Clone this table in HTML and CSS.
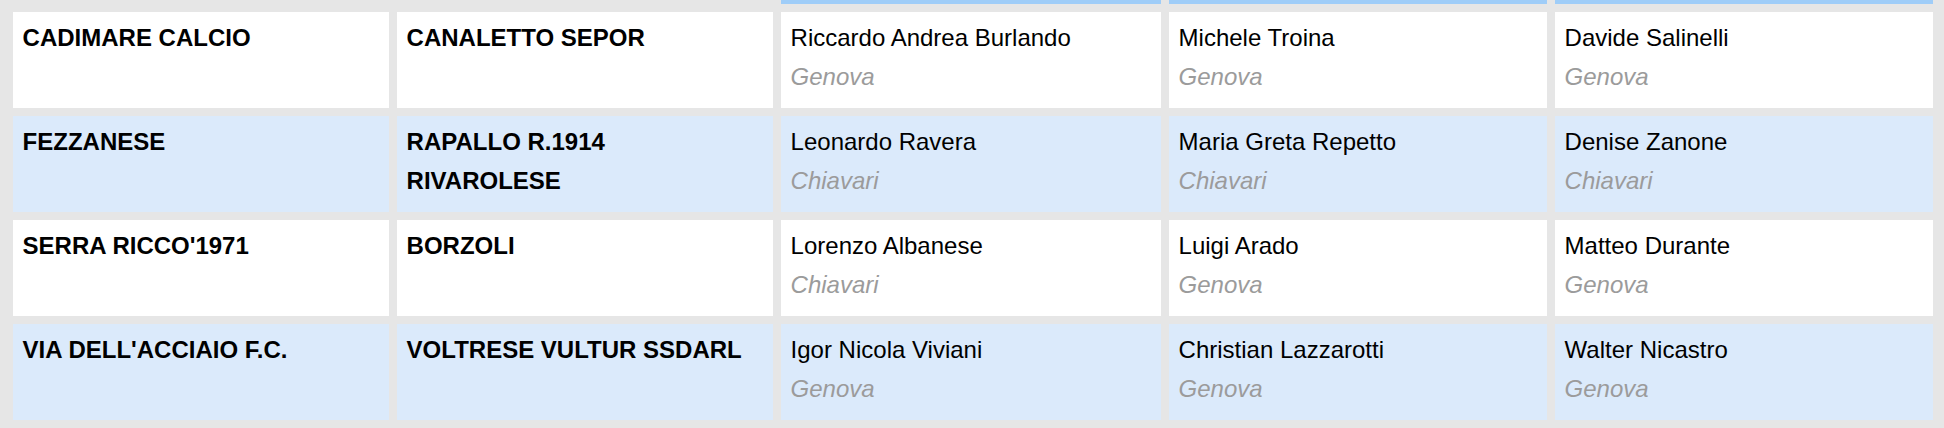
FILE: index.html
```html
<!DOCTYPE html>
<html lang="it">
<head>
<meta charset="utf-8">
<title>Designazioni</title>
<link rel="stylesheet" href="styles.css">
</head>
<body>
<div class="table">
  <div class="hcell blank"></div>
  <div class="hcell blank"></div>
  <div class="hcell"></div>
  <div class="hcell"></div>
  <div class="hcell"></div>

  <div class="cell team">CADIMARE CALCIO</div>
  <div class="cell team">CANALETTO SEPOR</div>
  <div class="cell"><div class="name">Riccardo Andrea Burlando</div><div class="city">Genova</div></div>
  <div class="cell"><div class="name">Michele Troina</div><div class="city">Genova</div></div>
  <div class="cell"><div class="name">Davide Salinelli</div><div class="city">Genova</div></div>

  <div class="cell team alt">FEZZANESE</div>
  <div class="cell team alt">RAPALLO R.1914 RIVAROLESE</div>
  <div class="cell alt"><div class="name">Leonardo Ravera</div><div class="city">Chiavari</div></div>
  <div class="cell alt"><div class="name">Maria Greta Repetto</div><div class="city">Chiavari</div></div>
  <div class="cell alt"><div class="name">Denise Zanone</div><div class="city">Chiavari</div></div>

  <div class="cell team">SERRA RICCO'1971</div>
  <div class="cell team">BORZOLI</div>
  <div class="cell"><div class="name">Lorenzo Albanese</div><div class="city">Chiavari</div></div>
  <div class="cell"><div class="name">Luigi Arado</div><div class="city">Genova</div></div>
  <div class="cell"><div class="name">Matteo Durante</div><div class="city">Genova</div></div>

  <div class="cell team alt">VIA DELL'ACCIAIO F.C.</div>
  <div class="cell team alt">VOLTRESE VULTUR SSDARL</div>
  <div class="cell alt"><div class="name">Igor Nicola Viviani</div><div class="city">Genova</div></div>
  <div class="cell alt"><div class="name">Christian Lazzarotti</div><div class="city">Genova</div></div>
  <div class="cell alt"><div class="name">Walter Nicastro</div><div class="city">Genova</div></div>
</div>
</body>
</html>
```
FILE: styles.css
```css
html, body {
  margin: 0;
  padding: 0;
  background: #e6e6e6;
}

.table {
  display: grid;
  grid-template-columns: 376px 376px 380px 378px 378px;
  grid-template-rows: 4px repeat(4, 96px);
  gap: 8px;
  padding: 0 11px 8px 13px;
  background: #e6e6e6;
  font-family: "Liberation Sans", Arial, Helvetica, sans-serif;
  font-size: 24px;
  line-height: 38.4px;
  color: #000;
}

.hcell {
  background: #9fcdf8;
}

.hcell.blank {
  background: transparent;
}

.cell {
  background: #ffffff;
  padding: 7.4px 9.6px 11.8px;
  box-sizing: border-box;
}

.cell.alt {
  background: #dbeafb;
}

.team {
  font-weight: bold;
}

.city {
  font-style: italic;
  color: #9b9b9b;
}
```
